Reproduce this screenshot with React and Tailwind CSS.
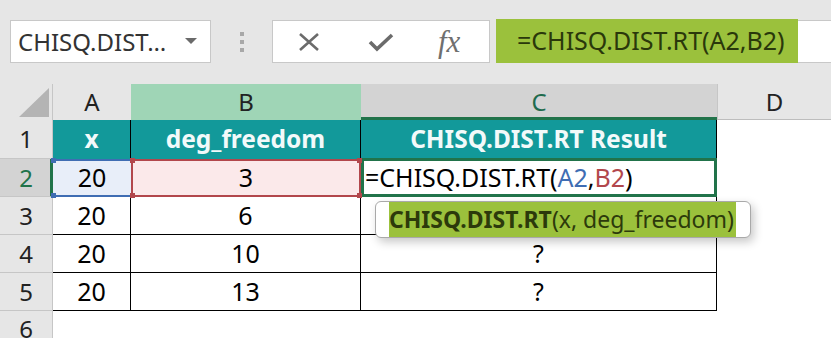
import React from "react";

const rowHead = "bg-[#e6e6e6] border-r border-b border-[#c6c6c6] flex items-center justify-center text-[24px] text-[#222]";
const cell = "bg-white border-r border-b border-black flex items-center justify-center text-[25px] text-black";
const teal = "bg-[#12999a] border-r border-black flex items-center justify-center text-[24.5px] font-bold text-[#f2fafa]";

function Handle({ className }) {
  return <div className={"absolute w-[5px] h-[5px] " + className} />;
}

export default function App() {
  return (
    <div className="w-[831px] h-[338px] overflow-hidden bg-white font-['Noto_Sans',sans-serif] relative">
      {/* Top bar */}
      <div className="h-[84px] bg-[#e6e6e6] flex items-start pt-[20px] pl-[10px]">
        <div className="w-[201px] h-[43px] bg-white border border-[#c8c8c8] flex items-center justify-between pl-[7px] pr-[13px]">
          <span className="text-[24px] text-[#333] leading-none">CHISQ.DIST…</span>
          <svg width="12" height="7" viewBox="0 0 12 7">
            <polygon points="0,0 12,0 6,6" fill="#6a6a6a" />
          </svg>
        </div>
        <div className="w-[61px] h-[43px] flex flex-col items-center justify-center gap-[4px]">
          <div className="w-[4px] h-[4px] bg-[#a8a8a8]" />
          <div className="w-[4px] h-[4px] bg-[#a8a8a8]" />
          <div className="w-[4px] h-[4px] bg-[#a8a8a8]" />
        </div>
        <div className="w-[218px] h-[43px] bg-white border border-[#c8c8c8] flex items-center pl-[25px]">
          <svg width="22" height="20" viewBox="0 0 22 20">
            <path d="M2 2 L20 18 M20 2 L2 18" stroke="#6b6b6b" strokeWidth="2.6" fill="none" />
          </svg>
          <svg width="26" height="20" viewBox="0 0 26 20" className="ml-[48px]">
            <polyline points="2,10 9,17 24,3" stroke="#6b6b6b" strokeWidth="3.6" fill="none" />
          </svg>
          <span className="ml-[44px] font-['Liberation_Serif',serif] italic text-[31px] text-[#6f6f6f] leading-none">fx</span>
        </div>
        <div className="ml-[6px] flex-1 h-[43px] flex">
          <div className="w-[302px] h-[44px] -mt-[1px] bg-[#9bc13c] flex items-center pl-[21px] text-[25px] text-[#2a380b] whitespace-nowrap">
            =CHISQ.DIST.RT(A2,B2)
          </div>
          <div className="flex-1 h-full bg-white border-y border-[#c8c8c8]" />
        </div>
      </div>

      {/* Grid */}
      <div className="grid grid-cols-[53px_78px_230px_356px_1fr] grid-rows-[36px_39px_38px_38px_38px_38px]">
        {/* column headers */}
        <div className="bg-[#e6e6e6] border-r border-[#c6c6c6] flex items-end justify-end pr-[3px] pb-[3px]">
          <svg width="30" height="29" viewBox="0 0 30 29">
            <polygon points="0,29 30,29 30,0" fill="#b4b4b4" />
          </svg>
        </div>
        <div className="bg-[#e6e6e6] flex items-center justify-center text-[24px] text-[#222]">A</div>
        <div className="bg-[#9fd5b6] flex items-center justify-center text-[24px] text-[#222]">B</div>
        <div className="bg-[#d3d3d3] border-b-[3px] border-[#21734a] flex items-center justify-center text-[24px] text-[#1f6b4d] pt-[2px]">C</div>
        <div className="bg-[#e6e6e6] border-b border-[#bdbdbd] border-l border-l-[#c6c6c6] flex items-center justify-center text-[24px] text-[#222]">D</div>

        {/* row 1 */}
        <div className={rowHead}>1</div>
        <div className={teal}>x</div>
        <div className={teal}>deg_freedom</div>
        <div className={teal}>CHISQ.DIST.RT Result</div>
        <div className="bg-white" />

        {/* row 2 */}
        <div className="bg-[#d3d3d3] border-r-[3px] border-r-[#21734a] border-b border-b-[#c6c6c6] flex items-center justify-center text-[24px] text-[#21734a] pl-[2px]">2</div>
        <div className="relative bg-[#e8eef9] border-y-2 border-[#3f6db3] flex items-center justify-center text-[25px] text-black">
          20
          <Handle className="bg-[#3f6db3] -left-[2px] -top-[3px]" />
          <Handle className="bg-[#3f6db3] -left-[2px] -bottom-[3px]" />
        </div>
        <div className="relative bg-[#fbe9ea] border-2 border-[#b2474c] flex items-center justify-center text-[25px] text-black">
          3
          <Handle className="bg-[#b2474c] -left-[3px] -top-[3px]" />
          <Handle className="bg-[#b2474c] -right-[3px] -top-[3px]" />
          <Handle className="bg-[#b2474c] -left-[3px] -bottom-[3px]" />
          <Handle className="bg-[#b2474c] -right-[3px] -bottom-[3px]" />
        </div>
        <div className="bg-white border-[3px] border-[#21734a] -mt-[1px] flex items-center pl-[1px] text-[25px] text-black whitespace-nowrap">
          =CHISQ.DIST.RT(<span className="text-[#3f6db3]">A2</span>,<span className="text-[#b2474c]">B2</span>)
        </div>
        <div className="bg-white" />

        {/* rows 3-5 */}
        {[
          ["3", "20", "6", ""],
          ["4", "20", "10", "?"],
          ["5", "20", "13", "?"],
        ].map(([r, a, b, c]) => (
          <React.Fragment key={r}>
            <div className={rowHead}>{r}</div>
            <div className={cell}>{a}</div>
            <div className={cell}>{b}</div>
            <div className={cell}>{c}</div>
            <div className="bg-white" />
          </React.Fragment>
        ))}

        {/* row 6 */}
        <div className={rowHead}>6</div>
        <div className="bg-white" />
        <div className="bg-white" />
        <div className="bg-white" />
        <div className="bg-white" />
      </div>

      {/* tooltip */}
      <div className="absolute left-[375px] top-[201px] w-[376px] h-[37px] bg-white border border-[#a9a9a9] rounded-[6px] shadow-[3px_4px_10px_rgba(0,0,0,0.22)] flex items-stretch pl-[13px] overflow-hidden">
        <div className="bg-[#9bc13c] flex items-center text-[23px] text-[#2c3a0b] whitespace-nowrap pr-[2px]">
          <span className="font-bold">CHISQ.DIST.RT</span>(x, deg_freedom)
        </div>
      </div>
    </div>
  );
}
